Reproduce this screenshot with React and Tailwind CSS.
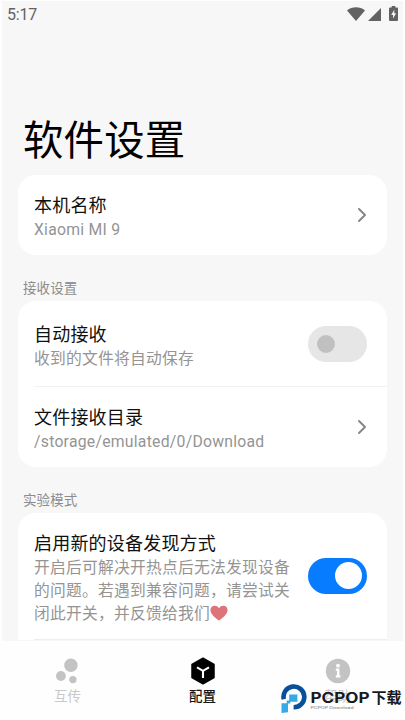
import React, { useState } from 'react';

function StatusBar() {
  return (
    <div className="flex h-7 shrink-0 items-center justify-between pl-[7px] pr-[7px] text-[#626262]">
      <span className="pt-[1px] text-[16px] leading-[28px] tracking-[-0.2px]">5:17</span>
      <div className="flex h-[15px] items-end pb-[1px]">
        <svg className="mr-[3px] h-[14px] w-[18px]" viewBox="0 0 18 14" fill="currentColor">
          <path d="M0 3.4C4.8-.9 13.2-.9 18 3.4L9 14Z" />
        </svg>
        <svg className="mr-[8px] h-[13px] w-[13px]" viewBox="0 0 13 13" fill="currentColor">
          <path d="M13 0v13H0Z" />
        </svg>
        <svg className="h-[15px] w-[9px]" viewBox="0 0 9 15" fill="currentColor">
          <path d="M2.7 0h3.6v1.5h1.8q.9 0 .9.9v11.7q0 .9-.9.9H.9q-.9 0-.9-.9V2.4q0-.9.9-.9h1.8Z" />
          <path d="M5.4 3.6 2.2 8.9h1.9v3.7l3-5.4H5.2Z" fill="#f7f7f7" />
        </svg>
      </div>
    </div>
  );
}

function Chevron() {
  return (
    <svg className="mr-[1px] h-[14px] w-[8px] shrink-0" viewBox="0 0 8 14" fill="none" stroke="#858585" strokeWidth="1.9" strokeLinecap="round" strokeLinejoin="round">
      <path d="M1 1l6 6-6 6" />
    </svg>
  );
}

function Toggle({ checked, onChange }) {
  return (
    <button
      role="switch"
      aria-checked={checked}
      onClick={() => onChange(!checked)}
      className={`flex h-9 w-[59px] shrink-0 items-center rounded-full ${checked ? 'justify-end bg-[#087cff] pr-[5px]' : 'justify-start bg-[#e6e6e6] pl-[9px]'}`}
    >
      <span className={`rounded-full ${checked ? 'h-[27px] w-[27px] bg-white' : 'h-[18px] w-[18px] bg-[#c0c0c0]'}`}></span>
    </button>
  );
}

function Row({ title, className, textClassName, children, action }) {
  return (
    <div className={`flex items-center justify-between pl-4 pr-5 ${className}`}>
      <div className={`w-[262px] ${textClassName}`}>
        <h3 className="text-[18px] font-normal leading-[24px] tracking-[0.2px] text-[#101010]">{title}</h3>
        <p className="text-[15.75px] leading-[23px] tracking-[0.25px] text-[#949494]">{children}</p>
      </div>
      {action}
    </div>
  );
}

function SectionLabel({ children }) {
  return <h2 className="pl-[21px] text-[13.5px] font-normal leading-[20px] tracking-[0.1px] text-[#8c8c8c]">{children}</h2>;
}

function Watermark() {
  return (
    <div className="absolute bottom-[6px] left-[281px] flex h-[30px] w-[122px]">
      <svg className="h-[30px] w-[26px] shrink-0" viewBox="0 0 26 30">
        <path d="M2.8 15.3A10.4 10.4 0 1 1 12.6 23.3" fill="none" stroke="#09509a" strokeWidth="4.6" />
        <path d="M8.2 10.6h8.2v7.2H9.3v1.8H7v8.6L.5 29V19.2h5.2v-2.6h2.5Z" fill="#35aae5" />
      </svg>
      <div className="pl-[3px] pt-[6px]">
        <div className="flex h-[15px] items-center whitespace-nowrap text-[#17191c]">
          <svg className="h-[15px] w-[93px] overflow-visible" viewBox="0 0 93 15" fill="currentColor">
            <text x="0.5" y="13" fontFamily="Inter, sans-serif" fontSize="14" fontWeight="700" textLength="59" lengthAdjust="spacingAndGlyphs">PCPOP</text>
            <text x="61.5" y="12.6" fontFamily="'Noto Sans CJK SC', sans-serif" fontSize="15" fontWeight="700">下载</text>
          </svg>
        </div>
        <svg className="h-[6px] w-[44px]" viewBox="0 0 44 6" fill="#707070">
          <text x="0.5" y="3.9" fontFamily="Inter, sans-serif" fontSize="3.6" textLength="43" lengthAdjust="spacingAndGlyphs">PCPOP Download</text>
        </svg>
      </div>
    </div>
  );
}

function TabBar() {
  return (
    <nav className="relative grid h-[79px] shrink-0 grid-cols-3 bg-[#fefefe] text-[13.5px] leading-[20px]">
      <div className="flex flex-col items-center pt-[17px] text-[#c8c8c8]">
        <svg className="h-[26px] w-[24px]" viewBox="0 0 24 26" fill="#c3c3c3">
          <circle cx="14.9" cy="7.3" r="6.7" />
          <circle cx="4.9" cy="18" r="4.9" />
          <circle cx="16.9" cy="21.6" r="3.7" />
        </svg>
        <span className="mt-[2px]">互传</span>
      </div>
      <div className="flex flex-col items-center pt-[16px] text-[#151515]">
        <svg className="h-[28px] w-[26px]" viewBox="0 0 26 28">
          <path d="M13 1.2 24 7.5v13L13 26.8 2 20.5v-13Z" fill="#000" stroke="#000" strokeWidth="1.5" strokeLinejoin="round" />
          <path d="M7 10.3 13 13.8l6-3.5M13 13.8V21" fill="none" stroke="#fff" strokeWidth="2.1" />
        </svg>
        <span className="mt-[1px] font-medium">配置</span>
      </div>
      <div className="flex flex-col items-center pt-[17px] text-[#c8c8c8]">
        <svg className="h-[26px] w-[26px]" viewBox="0 0 26 26">
          <circle cx="13" cy="13" r="12.2" fill="#c3c3c3" />
          <circle cx="13" cy="7.7" r="1.9" fill="#fff" />
          <path d="M10.8 11.6h2.4v6.8m-2.4 0h4.6" fill="none" stroke="#fff" strokeWidth="2.4" />
        </svg>
        <span className="mt-[2px]">帮助</span>
      </div>
      <Watermark />
    </nav>
  );
}

function App() {
  const [autoReceive, setAutoReceive] = useState(false);
  const [discovery, setDiscovery] = useState(true);

  return (
    <div className="flex h-[720px] w-[405px] flex-col overflow-hidden bg-[#fefefe] font-['Roboto','Noto_Sans_CJK_SC',sans-serif]">
      <div className="mx-[2px] mt-[1px] flex h-[640px] shrink-0 flex-col overflow-hidden bg-[#f7f7f7]">
        <div className="-mx-[2px] -mt-[1px]">
          <StatusBar />
        </div>
        <h1 className="mt-[84px] h-[63px] shrink-0 pl-[21px] text-[40.4px] font-normal leading-[60px] tracking-[0.2px] text-black">软件设置</h1>

        <div className="mx-4 shrink-0 rounded-[18px] bg-white">
          <Row title="本机名称" className="h-[80px]" textClassName="pt-[4px]" action={<Chevron />}>Xiaomi MI 9</Row>
        </div>

        <div className="mb-[3px] mt-[23px]">
          <SectionLabel>接收设置</SectionLabel>
        </div>
        <div className="mx-4 shrink-0 rounded-[18px] bg-white">
          <Row title="自动接收" className="h-[85px]" textClassName="pt-[6px]" action={<Toggle checked={autoReceive} onChange={setAutoReceive} />}>
            收到的文件将自动保存
          </Row>
          <div className="ml-4 h-[1px] bg-[#f2f2f2]"></div>
          <Row title="文件接收目录" className="h-[80px]" textClassName="pt-[4px]" action={<Chevron />}>/storage/emulated/0/Download</Row>
        </div>

        <div className="mb-[3px] mt-[23px]">
          <SectionLabel>实验模式</SectionLabel>
        </div>
        <div className="mx-4 shrink-0 rounded-t-[18px] bg-white">
          <Row title="启用新的设备发现方式" className="h-[125px]" textClassName="pt-[6px]" action={<Toggle checked={discovery} onChange={setDiscovery} />}>
            开启后可解决开热点后无法发现设备的问题。若遇到兼容问题，请尝试关闭此开关，并反馈给我们
            <svg className="inline-block h-[16px] w-[18px] align-[-2px]" viewBox="0 0 18 16">
              <path d="M9 15.6C6.2 13.5.4 9.4.4 4.9.4.4 6.8-1 9 3.3 11.2-1 17.6.4 17.6 4.9c0 4.5-5.8 8.6-8.6 10.7Z" fill="#dc7479" />
            </svg>
          </Row>
          <div className="ml-4 mt-[1px] h-[1px] bg-[#eeeeee]"></div>
        </div>
      </div>
      <TabBar />
    </div>
  );
}

export default App;
